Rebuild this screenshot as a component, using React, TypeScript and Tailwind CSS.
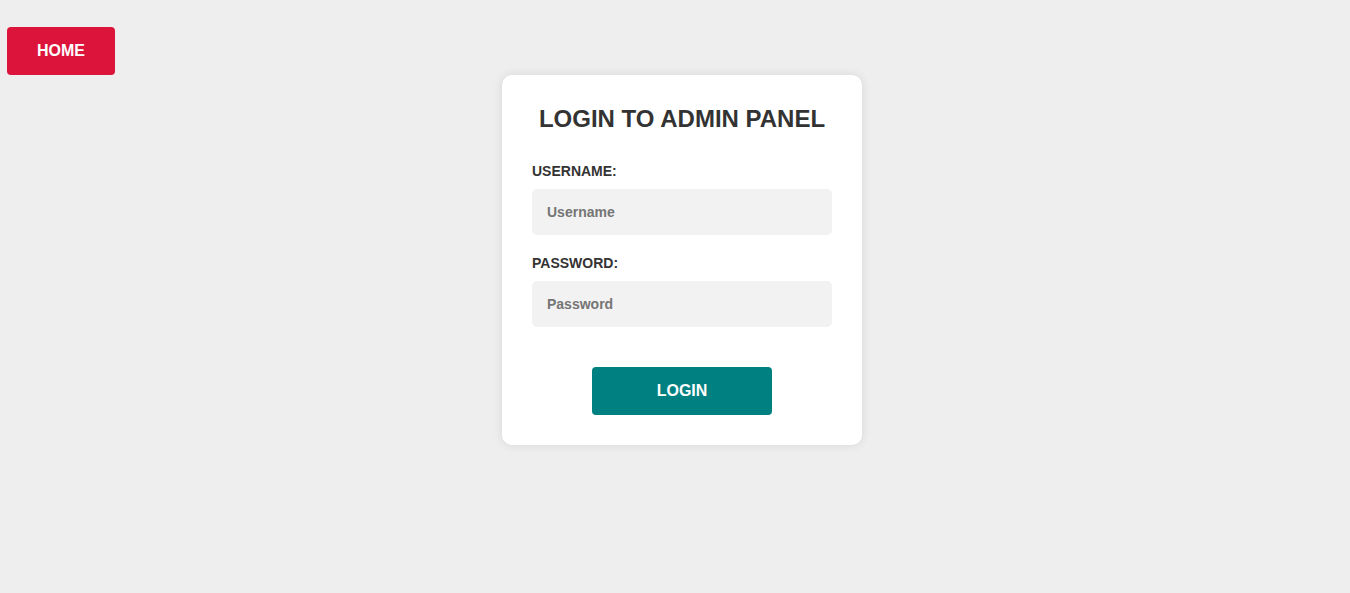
export default function App() {
  return (
    <div className="min-h-[593px] bg-[#eeeeee] font-['Liberation_Sans',Arial,sans-serif]">
      {/* Home link */}
      <div className="pt-[27px] pl-[7px]">
        <button className="w-[108px] h-[48px] rounded-[4px] bg-[#dc143c] text-white text-[16px] font-bold">
          HOME
        </button>
      </div>

      {/* Login card */}
      <div className="flex justify-center pl-[14px]">
        <form className="w-[360px] bg-white rounded-[10px] p-[30px] shadow-[0_0_10px_rgba(0,0,0,0.1)] flex flex-col">
          <h2 className="text-center text-[24px] font-bold text-[#333333] leading-[1.117] mt-[1px] mb-[31px]">
            LOGIN TO ADMIN PANEL
          </h2>

          <label className="text-[14px] font-bold text-[#333333] leading-[1.117] mb-[10px]">USERNAME:</label>
          <input
            placeholder="Username"
            className="h-[46px] rounded-[5px] bg-[#f2f2f2] px-[15px] text-[14px] font-bold text-[#333] placeholder:text-[#757575] outline-none mb-[21px]"
          />

          <label className="text-[14px] font-bold text-[#333333] leading-[1.117] mb-[9px]">PASSWORD:</label>
          <input
            type="password"
            placeholder="Password"
            className="h-[46px] rounded-[5px] bg-[#f2f2f2] px-[15px] text-[14px] font-bold text-[#333] placeholder:text-[#757575] outline-none"
          />

          <button
            type="button"
            className="mt-[40px] self-center w-[180px] h-[48px] rounded-[4px] bg-[#008080] text-white text-[16px] font-bold"
          >
            LOGIN
          </button>
        </form>
      </div>
    </div>
  )
}
